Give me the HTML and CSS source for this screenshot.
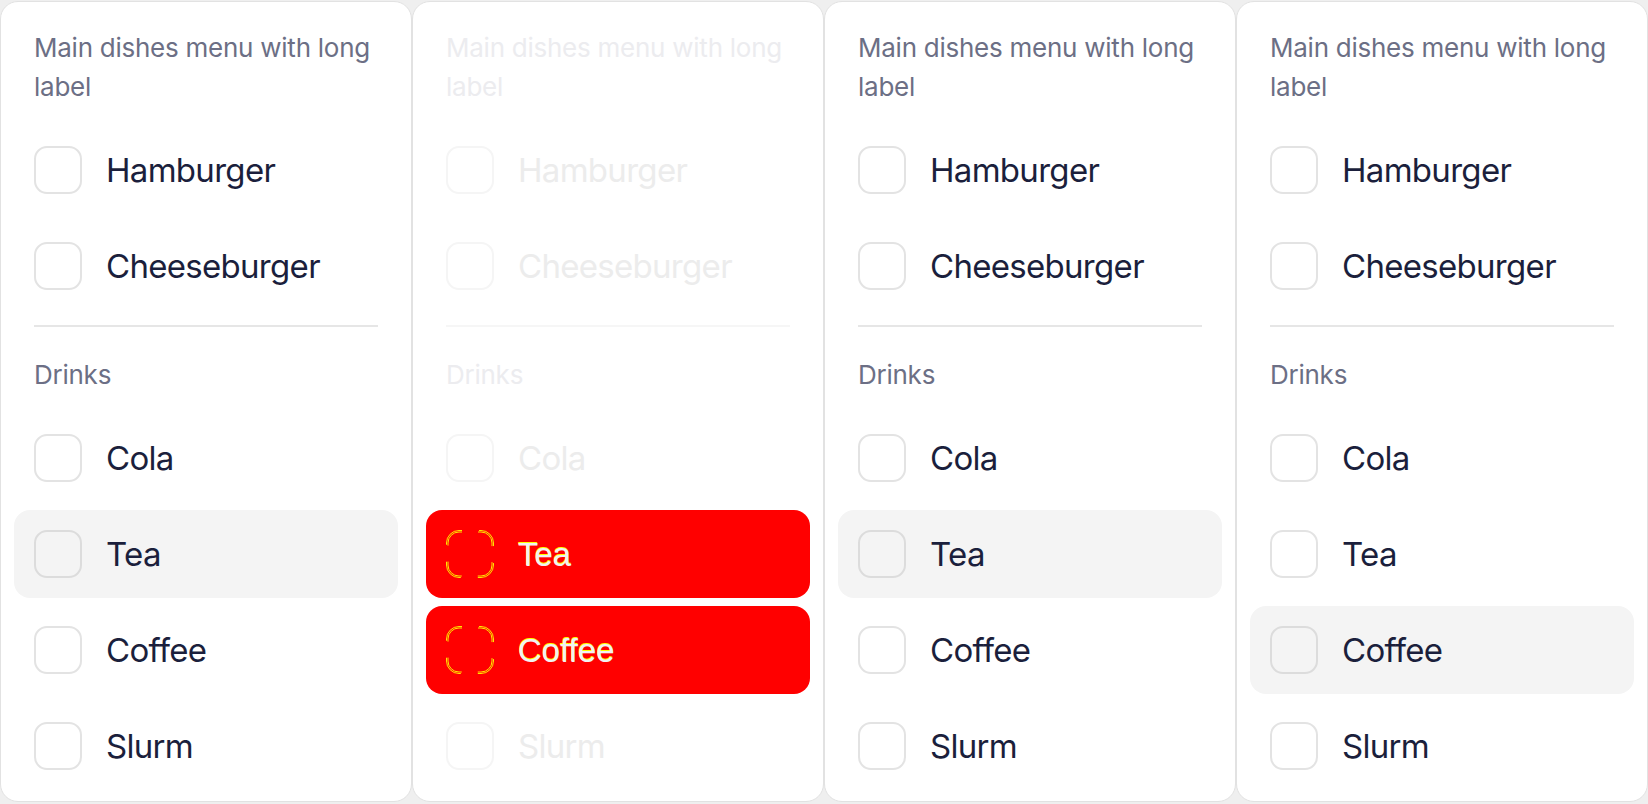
FILE: index.html
```html
<!DOCTYPE html>
<html>
<head>
<meta charset="utf-8">
<link rel="stylesheet" href="styles.css">
</head>
<body>
<div class="board">
  <div class="card">
    <div class="group-label">Main dishes menu with long label</div>
    <div class="row"><span class="box"></span><span class="txt">Hamburger</span></div>
    <div class="row"><span class="box"></span><span class="txt">Cheeseburger</span></div>
    <div class="sep"></div>
    <div class="group-label">Drinks</div>
    <div class="row"><span class="box"></span><span class="txt">Cola</span></div>
    <div class="row hover"><span class="box"></span><span class="txt">Tea</span></div>
    <div class="row"><span class="box"></span><span class="txt">Coffee</span></div>
    <div class="row"><span class="box"></span><span class="txt">Slurm</span></div>
  </div>
  <div class="card disabled">
    <div class="group-label">Main dishes menu with long label</div>
    <div class="row"><span class="box"></span><span class="txt">Hamburger</span></div>
    <div class="row"><span class="box"></span><span class="txt">Cheeseburger</span></div>
    <div class="sep"></div>
    <div class="group-label">Drinks</div>
    <div class="row"><span class="box"></span><span class="txt">Cola</span></div>
    <div class="row diff"><svg class="dbox" width="48" height="48" viewBox="0 0 48 48"><rect x="0.5" y="0.5" width="47" height="47" rx="12.5" class="d1"/><rect x="2" y="2" width="44" height="44" rx="11" class="d2"/></svg><span class="txt">Tea</span></div>
    <div class="row diff"><svg class="dbox" width="48" height="48" viewBox="0 0 48 48"><rect x="0.5" y="0.5" width="47" height="47" rx="12.5" class="d1"/><rect x="2" y="2" width="44" height="44" rx="11" class="d2"/></svg><span class="txt">Coffee</span></div>
    <div class="row"><span class="box"></span><span class="txt">Slurm</span></div>
  </div>
  <div class="card">
    <div class="group-label">Main dishes menu with long label</div>
    <div class="row"><span class="box"></span><span class="txt">Hamburger</span></div>
    <div class="row"><span class="box"></span><span class="txt">Cheeseburger</span></div>
    <div class="sep"></div>
    <div class="group-label">Drinks</div>
    <div class="row"><span class="box"></span><span class="txt">Cola</span></div>
    <div class="row hover"><span class="box"></span><span class="txt">Tea</span></div>
    <div class="row"><span class="box"></span><span class="txt">Coffee</span></div>
    <div class="row"><span class="box"></span><span class="txt">Slurm</span></div>
  </div>
  <div class="card">
    <div class="group-label">Main dishes menu with long label</div>
    <div class="row"><span class="box"></span><span class="txt">Hamburger</span></div>
    <div class="row"><span class="box"></span><span class="txt">Cheeseburger</span></div>
    <div class="sep"></div>
    <div class="group-label">Drinks</div>
    <div class="row"><span class="box"></span><span class="txt">Cola</span></div>
    <div class="row"><span class="box"></span><span class="txt">Tea</span></div>
    <div class="row hover"><span class="box"></span><span class="txt">Coffee</span></div>
    <div class="row"><span class="box"></span><span class="txt">Slurm</span></div>
  </div>
</div>
</body>
</html>
```
FILE: styles.css
```css
html, body {
  margin: 0;
  padding: 0;
  background: #efefef;
  font-family: Inter, "Noto Sans", sans-serif;
}
.board {
  display: flex;
  padding-top: 1px;
  height: 804px;
  box-sizing: border-box;
}
.card {
  width: 412px;
  height: 801px;
  box-sizing: border-box;
  background: #fff;
  border: 1px solid #e2e2e2;
  border-radius: 18px;
  padding: 12px 13px 10px;
  display: flex;
  flex-direction: column;
  gap: 8px;
}
.group-label {
  padding: 14px 20px 12px;
  font-size: 26px;
  line-height: 39px;
  letter-spacing: -0.25px;
  color: #6c6f85;
}
.row {
  height: 88px;
  box-sizing: border-box;
  padding: 0 20px;
  display: flex;
  align-items: center;
  gap: 24px;
  border-radius: 16px;
}
.row.hover {
  background: #f4f4f4;
}
.box {
  width: 48px;
  height: 48px;
  box-sizing: border-box;
  border: 2px solid #e3e3e3;
  border-radius: 13px;
  background: #fff;
  flex: none;
}
.row.hover .box {
  background: #f4f4f4;
  border-color: #dcdcdc;
}
.txt {
  font-size: 33px;
  letter-spacing: -0.7px;
  color: #1b1f3c;
}
.sep {
  height: 2px;
  background: #e6e6e6;
  margin: 7px 20px 6px;
}
.card.disabled .group-label { color: #ececef; }
.card.disabled .txt { color: #ececec; }
.card.disabled .box { border-color: #f5f5f5; }
.card.disabled .sep { background: #f6f6f6; }
.card.disabled .row.diff {
  background: #ff0000;
}
.card.disabled .row.diff .txt {
  font-family: "Liberation Sans", Arial, sans-serif;
  letter-spacing: 0;
  color: #f2f2f2;
  padding-top: 2px;
  text-shadow: -0.6px -0.6px 0 #ffff00;
}
.dbox {
  flex: none;
  display: block;
}
.dbox rect {
  fill: none;
  stroke: #ffff00;
  stroke-width: 0.9;
}
.dbox .d1 {
  stroke-dasharray: 3 17 24.6 17 24.6 17 24.6 17 21.6;
}
.dbox .d2 {
  stroke-dasharray: 3 16 23.3 16 23.3 16 23.3 16 20.3;
}
```
